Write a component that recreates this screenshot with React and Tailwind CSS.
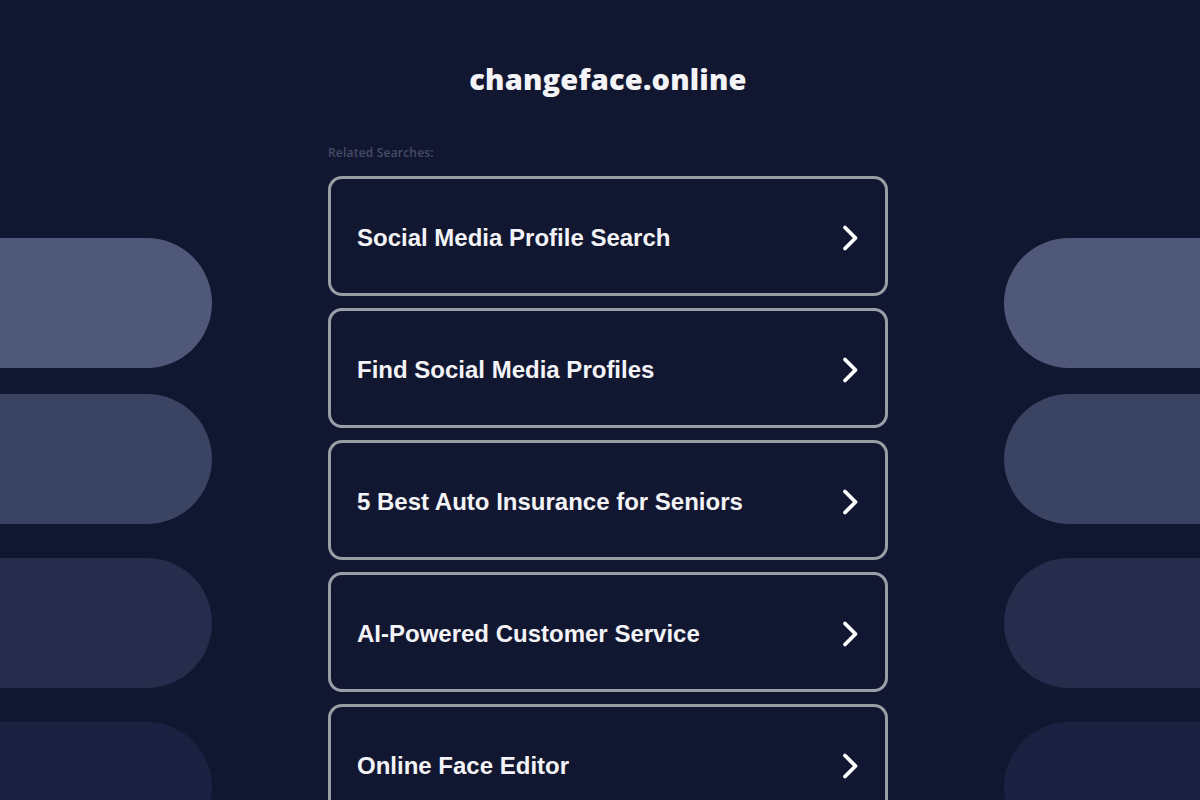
import React from 'react';

const searches = [
  'Social Media Profile Search',
  'Find Social Media Profiles',
  '5 Best Auto Insurance for Seniors',
  'AI-Powered Customer Service',
  'Online Face Editor',
];

function Chevron() {
  return (
    <svg width="20" height="28" viewBox="0 0 20 28" fill="none">
      <polyline
        points="5,3.5 15.5,14 5,24.5"
        stroke="#ffffff"
        strokeWidth="3.8"
        strokeLinecap="round"
        strokeLinejoin="round"
      />
    </svg>
  );
}

function SidePills({ side }) {
  const shape = side === 'left' ? 'rounded-r-full' : 'rounded-l-full';
  return (
    <div className="w-[212px] shrink-0 flex flex-col pt-[238px]">
      <div className={`h-[130px] shrink-0 bg-[#4f5878] ${shape}`} />
      <div className={`h-[130px] shrink-0 mt-[26px] bg-[#3b4362] ${shape}`} />
      <div className={`h-[130px] shrink-0 mt-[34px] bg-[#262d4c] ${shape}`} />
      <div className={`h-[130px] shrink-0 mt-[34px] bg-[#1b2141] ${shape}`} />
    </div>
  );
}

export default function App() {
  return (
    <div className="h-[800px] w-full overflow-hidden bg-[#121731] flex justify-start gap-[116px]">
      <SidePills side="left" />

      <div className="w-[560px] shrink-0 flex flex-col pt-[60px]">
        <h1 className="text-center text-[29px] leading-[38px] font-extrabold text-[#f4f4f8] tracking-[0.2px] [font-family:'Open_Sans',sans-serif]">
          changeface.online
        </h1>
        <div className="mt-[47px] text-[12px] leading-[16px] font-semibold text-[#454b69] tracking-[0.2px] [font-family:'Open_Sans',sans-serif]">
          Related Searches:
        </div>
        <div className="mt-[15px] flex flex-col gap-[12px]">
          {searches.map((s) => (
            <div
              key={s}
              className="h-[120px] shrink-0 border-[3px] border-[#9a9ea7] rounded-[14px] bg-[#121731] flex items-center justify-between pt-[3px] pl-[26px] pr-[25px]"
            >
              <span className="text-[24px] font-bold text-[#f4f4f8] [font-family:'Liberation_Sans',Arial,sans-serif]">
                {s}
              </span>
              <Chevron />
            </div>
          ))}
        </div>
      </div>

      <SidePills side="right" />
    </div>
  );
}
